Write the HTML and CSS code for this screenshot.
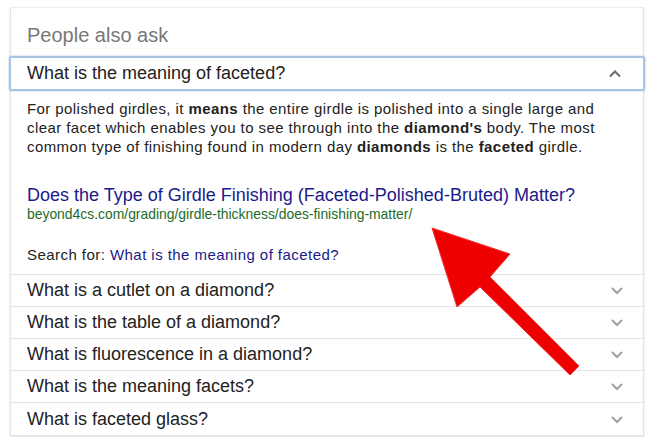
FILE: index.html
```html
<!DOCTYPE html>
<html>
<head>
<meta charset="utf-8">
<link rel="stylesheet" href="styles.css">
</head>
<body>
<div class="card">
  <div class="heading">People also ask</div>
  <div class="q open">
    <span>What is the meaning of faceted?</span>
    <svg class="chev up" width="14" height="9" viewBox="0 0 14 9"><path d="M2 7.5 L7 2.5 L12 7.5" fill="none" stroke="#6b6b6b" stroke-width="2"/></svg>
  </div>
  <div class="answer">
    <p class="text">For polished girdles, it <b>means</b> the entire girdle is polished into a single large and clear facet which enables you to see through into the <b>diamond's</b> body. The most common type of finishing found in modern day <b>diamonds</b> is the <b>faceted</b> girdle.</p>
    <div class="src">
      <a class="title">Does the Type of Girdle Finishing (Faceted-Polished-Bruted) Matter?</a>
      <div class="url">beyond4cs.com/grading/girdle-thickness/does-finishing-matter/</div>
    </div>
    <div class="search">Search for: <a>What is the meaning of faceted?</a></div>
  </div>
  <div class="q"><span>What is a cutlet on a diamond?</span><svg class="chev" width="14" height="9" viewBox="0 0 14 9"><path d="M2 2 L7 7 L12 2" fill="none" stroke="#a0a0a0" stroke-width="2"/></svg></div>
  <div class="q"><span>What is the table of a diamond?</span><svg class="chev" width="14" height="9" viewBox="0 0 14 9"><path d="M2 2 L7 7 L12 2" fill="none" stroke="#a0a0a0" stroke-width="2"/></svg></div>
  <div class="q"><span>What is fluorescence in a diamond?</span><svg class="chev" width="14" height="9" viewBox="0 0 14 9"><path d="M2 2 L7 7 L12 2" fill="none" stroke="#a0a0a0" stroke-width="2"/></svg></div>
  <div class="q"><span>What is the meaning facets?</span><svg class="chev" width="14" height="9" viewBox="0 0 14 9"><path d="M2 2 L7 7 L12 2" fill="none" stroke="#a0a0a0" stroke-width="2"/></svg></div>
  <div class="q last"><span>What is faceted glass?</span><svg class="chev" width="14" height="9" viewBox="0 0 14 9"><path d="M2 2 L7 7 L12 2" fill="none" stroke="#a0a0a0" stroke-width="2"/></svg></div>
</div>
<svg class="arrow" width="653" height="437" viewBox="0 0 653 437">
  <polygon points="432,228 510,254 490,277 579,366 570,375 480,287 457,307" fill="#ee0000" stroke="#f23030" stroke-width="1" stroke-linejoin="miter"/>
</svg>
</body>
</html>
```

FILE: styles.css
```css
html, body {
  margin: 0;
  padding: 0;
  background: #fff;
}
body {
  width: 653px;
  height: 437px;
  overflow: hidden;
  font-family: "Liberation Sans", Arial, sans-serif;
  color: #222;
  position: relative;
}
.card {
  margin: 7px 0 0 10px;
  width: 632px;
  border: 1px solid #e2e2e2;
  border-top-color: #ececec;
  box-shadow: 0 1px 2px rgba(0,0,0,0.12);
  background: #fff;
}
.heading {
  height: 48px;
  box-sizing: border-box;
  padding: 16px 0 0 16px;
  font-size: 20px;
  line-height: 22px;
  color: #787878;
}
.q {
  display: flex;
  align-items: center;
  justify-content: space-between;
  height: 32px;
  box-sizing: border-box;
  padding: 0 19px 0 16px;
  border-bottom: 1px solid #e4e4e4;
  font-size: 18px;
  color: #222;
}
.q.last {
  border-bottom: none;
}
.q.open {
  height: 35px;
  margin: 0 -2px 0 -2px;
  padding: 0 21px 0 16px;
  border: 2px solid #a7c4e2;
  box-shadow: 0 0 2px #9dbde0;
  border-radius: 2px;
}
.chev {
  display: block;
}
.answer {
  padding: 8px 16px 0 16px;
  height: 184px;
  box-sizing: border-box;
  border-bottom: 1px solid #e4e4e4;
}
.text {
  margin: 0;
  font-size: 15px;
  line-height: 19px;
  letter-spacing: 0.42px;
  color: #222;
}
.text b {
  font-weight: bold;
}
.src {
  margin-top: 29px;
}
.title {
  display: block;
  font-size: 18px;
  line-height: 20px;
  color: #1a1a8a;
}
.url {
  font-size: 13.9px;
  line-height: 18px;
  color: #1e6b2b;
}
.search {
  margin-top: 23px;
  font-size: 15px;
  line-height: 18px;
  letter-spacing: 0.45px;
  color: #222;
}
.search a {
  color: #1a1a8a;
}
.arrow {
  position: absolute;
  left: 0;
  top: 0;
  pointer-events: none;
}
```
